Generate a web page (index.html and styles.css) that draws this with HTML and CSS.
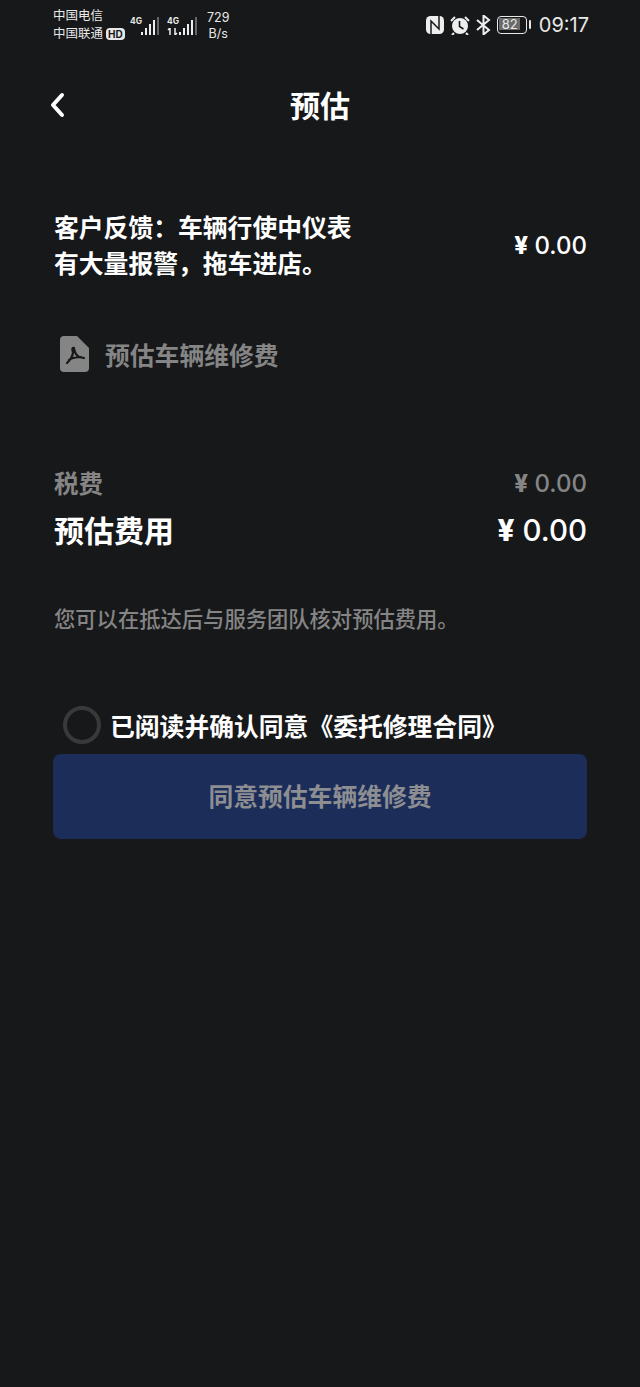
FILE: index.html
```html
<!DOCTYPE html>
<html lang="zh-CN">
<head>
    <meta charset="UTF-8">
    <meta name="viewport" content="width=device-width, initial-scale=1.0">
    <title>预估</title>
    <link rel="stylesheet" href="styles.css">
</head>
<body>
    <div class="status-bar">
        <div class="status-left">
            <div class="carriers">
                <div>中国电信</div>
                <div class="carrier-row">中国联通<span class="hd">HD</span></div>
            </div>
            <div class="signal">
                <span class="net">4G</span>
                <svg width="20" height="20" viewBox="0 0 20 20">
                    <rect x="1" y="16" width="2" height="3" fill="#eee"/>
                    <rect x="5" y="12" width="2" height="7" fill="#eee"/>
                    <rect x="9" y="8" width="2" height="11" fill="#eee"/>
                    <rect x="13" y="4" width="2" height="15" fill="#eee"/>
                    <rect x="17" y="1" width="2" height="18" fill="#666"/>
                </svg>
            </div>
            <div class="signal signal-second">
                <div class="net-col">
                    <span class="net">4G</span>
                    <svg width="11" height="7" viewBox="0 0 11 7">
                        <path d="M3 7V0L1 2M8 0v7l2-2" fill="none" stroke="#eee" stroke-width="1.5"/>
                    </svg>
                </div>
                <svg width="20" height="20" viewBox="0 0 20 20">
                    <rect x="1" y="16" width="2" height="3" fill="#eee"/>
                    <rect x="5" y="12" width="2" height="7" fill="#eee"/>
                    <rect x="9" y="8" width="2" height="11" fill="#eee"/>
                    <rect x="13" y="4" width="2" height="15" fill="#eee"/>
                    <rect x="17" y="1" width="2" height="18" fill="#666"/>
                </svg>
            </div>
            <div class="speed">
                <div>729</div>
                <div>B/s</div>
            </div>
        </div>
        <div class="status-right">
            <svg class="ico" width="18" height="18" viewBox="0 0 18 18">
                <rect x="0" y="0" width="18" height="18" rx="4.5" fill="#eee"/>
                <path d="M5 18V5l8 8V0" fill="none" stroke="#17181a" stroke-width="1.5"/>
            </svg>
            <svg class="ico" width="20" height="20" viewBox="0 0 20 20">
                <circle cx="10" cy="11" r="8" fill="#eee"/>
                <path d="M9.500 6v5.500l4 2.500" fill="none" stroke="#17181a" stroke-width="1.6"/>
                <path d="M1 6l4-4M19 6l-4-4M4 18l-2 2M16 18l2 2" stroke="#eee" stroke-width="2"/>
            </svg>
            <svg class="ico" width="15" height="20" viewBox="0 0 15 20">
                <path d="M1 5l12 10-5.500 4.500V.5L13 5 1 15" fill="none" stroke="#eee" stroke-width="2"/>
            </svg>
            <div class="battery-wrap">
                <div class="battery"><span class="battery-level">82</span></div>
                <span class="battery-tip"></span>
            </div>
            <span class="clock">09:17</span>
        </div>
    </div>

    <div class="nav">
        <svg class="back" width="16" height="26" viewBox="0 0 16 26">
            <path d="M13 3L4 13l9 10" fill="none" stroke="#fff" stroke-width="4" stroke-linecap="round" stroke-linejoin="round"/>
        </svg>
        <h1 class="nav-title">预估</h1>
    </div>

    <div class="content">
        <div class="item">
            <p class="item-text">客户反馈：车辆行使中仪表<br>有大量报警，拖车进店。</p>
            <span class="price"><span class="yen">¥</span> 0.00</span>
        </div>

        <div class="pdf-row">
            <svg width="29" height="36" viewBox="0 0 29 36">
                <path d="M4 0h13l12 12v20a4 4 0 0 1-4 4H4a4 4 0 0 1-4-4V4a4 4 0 0 1 4-4z" fill="#858585"/>
                <path d="M14 12c0 4 3 8 5 9l5 1M14 12c-2-1-2 2-1 4 0 3-3 8-6 11M9 24c3-2 7-3 12-3" fill="none" stroke="#17181a" stroke-width="2.2" stroke-linecap="round"/>
            </svg>
            <span>预估车辆维修费</span>
        </div>

        <div class="row tax">
            <span>税费</span>
            <span class="price-muted"><span class="yen">¥</span> 0.00</span>
        </div>
        <div class="row total">
            <span>预估费用</span>
            <span class="price-total"><span class="yen">¥</span> 0.00</span>
        </div>

        <p class="note">您可以在抵达后与服务团队核对预估费用。</p>

        <div class="agree">
            <span class="radio"></span>
            <span>已阅读并确认同意《委托修理合同》</span>
        </div>
        <button class="submit" type="button">同意预估车辆维修费</button>
    </div>
</body>
</html>
```

FILE: styles.css
```css
* {
    box-sizing: border-box;
}

body {
    margin: 0;
    height: 1387px;
    background-color: #17181a;
    color: #fff;
    font-family: "Inter", "Noto Sans CJK SC", sans-serif;
    overflow: hidden;
}

/* Barra de estado */
.status-bar {
    display: flex;
    justify-content: space-between;
    align-items: center;
    height: 48px;
    padding: 0 51px 0 53px;
    color: #e8e8e8;
}

.status-left,
.status-right {
    display: flex;
    align-items: center;
}

.carriers {
    width: 71px;
    font-size: 12.5px;
    line-height: 18px;
    margin-top: 2px;
    margin-right: 6px;
    white-space: nowrap;
}

.carrier-row {
    display: flex;
    align-items: center;
}

.hd {
    background-color: #e8e8e8;
    color: #17181a;
    font-size: 10px;
    font-weight: 700;
    line-height: 12px;
    padding: 0 2px;
    border-radius: 4px;
    margin-left: 3px;
}

.signal {
    display: flex;
    align-items: flex-start;
    height: 20px;
    margin-top: 4px;
}

.signal-second {
    margin-left: 7px;
}

.net {
    display: block;
    width: 10px;
    font-size: 8.5px;
    font-weight: 700;
    line-height: 10px;
}

.net-col svg {
    display: block;
    margin-top: 2px;
}

.speed {
    font-size: 12.5px;
    line-height: 16px;
    text-align: center;
    margin-top: 4px;
    margin-left: 9px;
}

.status-right {
    gap: 6px;
    margin-top: 1px;
}

.ico {
    display: block;
}

.battery-wrap {
    display: flex;
    align-items: center;
}

.battery {
    width: 30px;
    height: 18px;
    border: 1.5px solid #e8e8e8;
    border-radius: 4px;
    padding: 1.5px;
}

.battery-level {
    display: block;
    width: 21px;
    height: 12px;
    background-color: #6a6a6a;
    font-size: 13px;
    line-height: 12px;
    text-align: center;
}

.battery-tip {
    width: 2px;
    height: 9px;
    margin-left: 2px;
    background-color: #e8e8e8;
    border-radius: 1px;
}

.clock {
    font-size: 20px;
    margin-left: 2px;
}

/* Cabecera */
.nav {
    display: flex;
    align-items: center;
    justify-content: center;
    position: relative;
    height: 54px;
    margin-top: 29px;
}

.back {
    position: absolute;
    left: 49px;
    top: 15px;
}

.nav-title {
    margin: 0;
    font-size: 30px;
    font-weight: 700;
}

/* Contenido */
.content {
    padding: 0 53px;
}

.item {
    display: flex;
    justify-content: space-between;
    align-items: center;
    margin-top: 79px;
    padding-left: 1px;
}

.item-text {
    margin: 0;
    font-size: 24.8px;
    font-weight: 700;
    line-height: 36px;
}

.price {
    margin-top: -2px;
    font-size: 24px;
    font-weight: 500;
}

.yen {
    font-weight: 800;
}

.pdf-row {
    display: flex;
    align-items: center;
    gap: 16px;
    margin: 54px 0 0 7px;
    color: #858585;
    font-size: 24.8px;
    font-weight: 700;
}

.row {
    display: flex;
    justify-content: space-between;
    align-items: center;
    padding-left: 1px;
}

.tax {
    margin-top: 93px;
    color: #858585;
    font-size: 24.5px;
    font-weight: 700;
}

.price-muted {
    margin-top: 2px;
    font-size: 24px;
    font-weight: 500;
}

.total {
    margin-top: 7px;
    font-size: 30px;
    font-weight: 700;
}

.price-total {
    margin-top: 2px;
    font-size: 29.5px;
    font-weight: 500;
}

.note {
    margin: 52px 0 0;
    padding-left: 1px;
    color: #858585;
    font-size: 21.3px;
    font-weight: 500;
    line-height: 32px;
}

.agree {
    display: flex;
    align-items: center;
    gap: 9px;
    margin: 71px 0 0 10px;
    font-size: 24.8px;
    font-weight: 700;
}

.radio {
    width: 38px;
    height: 38px;
    border: 4px solid #38393a;
    border-radius: 50%;
}

.submit {
    display: block;
    width: 100%;
    height: 85px;
    margin-top: 10px;
    padding: 0 0 4px;
    background-color: #1c2d5a;
    color: #8c8e92;
    border: none;
    border-radius: 8px;
    font-family: inherit;
    font-size: 24.8px;
    font-weight: 700;
}
```
